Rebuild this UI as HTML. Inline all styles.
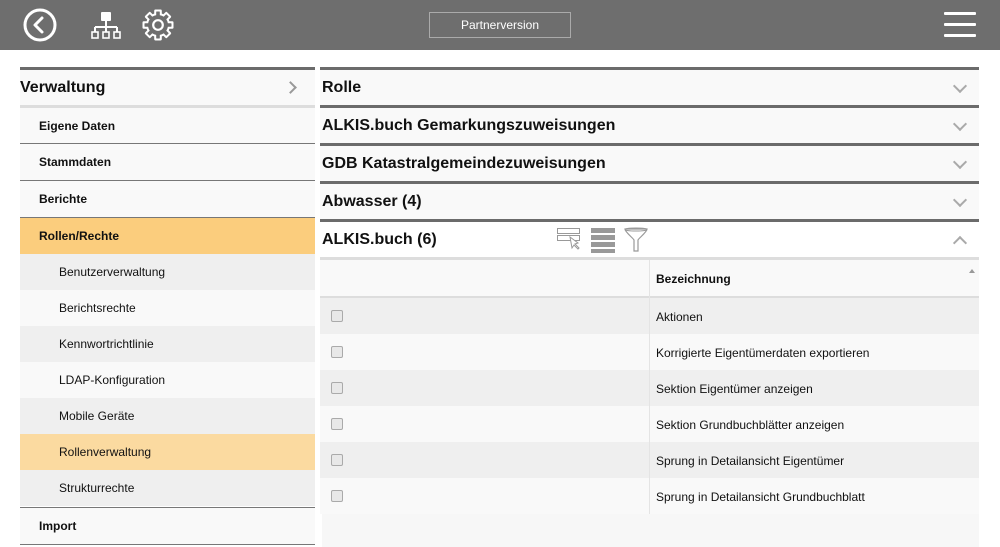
<!DOCTYPE html>
<html><head><meta charset="utf-8"><style>
*{box-sizing:border-box;margin:0;padding:0}
body{width:1000px;height:547px;background:#fff;font-family:"Liberation Sans",Arial,sans-serif;position:relative;overflow:hidden;color:#111}
.top{position:absolute;left:0;top:0;width:1000px;height:50px;background:#6e6e6e}
.pv{position:absolute;left:429px;top:12px;width:142px;height:26px;border:1px solid #aaa;color:#fff;font-size:12px;text-align:center;line-height:24px}
.hb{position:absolute;left:944px;width:32px;height:3px;background:#fff;border-radius:1px}
.r{position:absolute;left:0;width:295px;font-size:12px;padding-left:19px;border-top:1px solid #777;background:#f9f9f9;font-weight:bold}
.s{position:absolute;left:0;width:295px;font-size:12px;padding-left:39px;height:36px;line-height:36px}
.h{position:absolute;left:320px;width:659px;height:38px;border-top:3px solid #6b6b6b;background:#f9f9f9;font-size:16px;font-weight:bold;padding-left:2px;line-height:35px}
.chev{position:absolute;right:14px;top:11px;width:10px;height:10px;border-right:2px solid #aaa;border-bottom:2px solid #aaa;transform:rotate(45deg)}
.row{position:absolute;left:320px;width:659px;height:36px;font-size:12px}
.cb{position:absolute;left:11px;top:12px;width:12px;height:12px;border:1px solid #aaa;border-radius:2px;background:#e8e8e8}
.tx{position:absolute;left:336px;top:1px;line-height:36px}
</style></head><body>
<div class="top">
<svg style="position:absolute;left:22px;top:7px" width="36" height="36" viewBox="0 0 36 36"><circle cx="18" cy="18" r="15" fill="none" stroke="#fff" stroke-width="3"/><path d="M20 11 L13 18 L20 25" fill="none" stroke="#fff" stroke-width="3" stroke-linecap="round" stroke-linejoin="round"/></svg>
<svg style="position:absolute;left:90px;top:11px" width="32" height="30" viewBox="0 0 32 30"><rect x="11" y="1" width="10" height="9" rx="1" fill="#fff"/><path d="M16 10v6M5 16h22M5 16v5M16 16v5M27 16v5" stroke="#fff" stroke-width="2" fill="none"/><rect x="2" y="21" width="6" height="6" fill="none" stroke="#fff" stroke-width="1.6"/><rect x="13" y="21" width="6" height="6" fill="none" stroke="#fff" stroke-width="1.6"/><rect x="24" y="21" width="6" height="6" fill="none" stroke="#fff" stroke-width="1.6"/></svg>
<svg style="position:absolute;left:141px;top:8px" width="34" height="34" viewBox="-17 -17 34 34">
<g fill="#fff"><circle r="12"/>
<rect x="-3.8" y="-15.5" width="7.6" height="7" rx="1.2"/><rect x="-3.8" y="-15.5" width="7.6" height="7" rx="1.2" transform="rotate(45)"/><rect x="-3.8" y="-15.5" width="7.6" height="7" rx="1.2" transform="rotate(90)"/><rect x="-3.8" y="-15.5" width="7.6" height="7" rx="1.2" transform="rotate(135)"/><rect x="-3.8" y="-15.5" width="7.6" height="7" rx="1.2" transform="rotate(180)"/><rect x="-3.8" y="-15.5" width="7.6" height="7" rx="1.2" transform="rotate(225)"/><rect x="-3.8" y="-15.5" width="7.6" height="7" rx="1.2" transform="rotate(270)"/><rect x="-3.8" y="-15.5" width="7.6" height="7" rx="1.2" transform="rotate(315)"/></g>
<g fill="#6e6e6e"><circle r="10"/>
<rect x="-1.8" y="-13.5" width="3.6" height="5" rx=".5"/><rect x="-1.8" y="-13.5" width="3.6" height="5" rx=".5" transform="rotate(45)"/><rect x="-1.8" y="-13.5" width="3.6" height="5" rx=".5" transform="rotate(90)"/><rect x="-1.8" y="-13.5" width="3.6" height="5" rx=".5" transform="rotate(135)"/><rect x="-1.8" y="-13.5" width="3.6" height="5" rx=".5" transform="rotate(180)"/><rect x="-1.8" y="-13.5" width="3.6" height="5" rx=".5" transform="rotate(225)"/><rect x="-1.8" y="-13.5" width="3.6" height="5" rx=".5" transform="rotate(270)"/><rect x="-1.8" y="-13.5" width="3.6" height="5" rx=".5" transform="rotate(315)"/></g>
<circle r="4.8" fill="none" stroke="#fff" stroke-width="2.2"/></svg>
<div class="pv">Partnerversion</div>
<div class="hb" style="top:12px"></div><div class="hb" style="top:23px"></div><div class="hb" style="top:34px"></div>
</div>

<div class="r" style="top:67px;left:20px;height:38px;border-top:3px solid #6b6b6b;padding-left:0;font-size:16px;line-height:35px">Verwaltung<div style="position:absolute;right:20px;top:13px;width:9px;height:9px;border-right:2px solid #999;border-top:2px solid #999;transform:rotate(45deg)"></div></div>
<div class="r" style="top:105px;left:20px;height:38px;border-top:3px solid #ddd;line-height:36px">Eigene Daten</div>
<div class="r" style="top:143px;left:20px;height:38px;line-height:36px">Stammdaten</div>
<div class="r" style="top:180px;left:20px;height:37px;line-height:36px">Berichte</div>
<div class="r" style="top:217px;left:20px;height:37px;line-height:36px;background:#fbcd7d">Rollen/Rechte</div>
<div class="s" style="top:254px;left:20px;background:#efefef">Benutzerverwaltung</div>
<div class="s" style="top:290px;left:20px;background:#f9f9f9">Berichtsrechte</div>
<div class="s" style="top:326px;left:20px;background:#efefef">Kennwortrichtlinie</div>
<div class="s" style="top:362px;left:20px;background:#f9f9f9">LDAP-Konfiguration</div>
<div class="s" style="top:398px;left:20px;background:#efefef">Mobile Geräte</div>
<div class="s" style="top:434px;left:20px;background:#fbdaa0">Rollenverwaltung</div>
<div class="s" style="top:470px;left:20px;background:#efefef">Strukturrechte</div>
<div class="r" style="top:507px;left:20px;height:38px;line-height:36px">Import</div>
<div style="position:absolute;left:20px;top:544px;width:295px;height:1px;background:#777"></div>

<div class="h" style="top:67px">Rolle<div class="chev"></div></div>
<div class="h" style="top:105px">ALKIS.buch Gemarkungszuweisungen<div class="chev"></div></div>
<div class="h" style="top:143px">GDB Katastralgemeindezuweisungen<div class="chev"></div></div>
<div class="h" style="top:181px">Abwasser (4)<div class="chev"></div></div>
<div class="h" style="top:219px;background:#fff">ALKIS.buch (6)<div class="chev" style="transform:rotate(225deg);top:16px"></div>
<svg style="position:absolute;left:236px;top:4px" width="100" height="28" viewBox="0 0 100 28">
<rect x="1.5" y="2.5" width="22" height="5" fill="none" stroke="#999"/><rect x="1.5" y="9.5" width="22" height="5" fill="none" stroke="#999"/><path d="M14 11l2 11 2-3 4 4 1-1-4-4 3-1z" fill="#fff" stroke="#999"/>
<rect x="35" y="2" width="24" height="5" fill="#999"/><rect x="35" y="9" width="24" height="5" fill="#999"/><rect x="35" y="16" width="24" height="5" fill="#999"/><rect x="35" y="23" width="24" height="4" fill="#999"/>
<path d="M69 3h22c0 3-8 9-9 11v11h-4V14c-1-2-9-8-9-11z" fill="none" stroke="#999" stroke-width="1.2"/><ellipse cx="80" cy="3.5" rx="11" ry="1.5" fill="none" stroke="#999"/>
</svg></div>
<div style="position:absolute;left:320px;top:257px;width:659px;height:3px;background:#ddd"></div>
<div class="row" style="top:260px;height:37px;background:#f9f9f9;font-weight:bold"><div class="tx" style="line-height:36px">Bezeichnung</div><div style="position:absolute;right:4px;top:6px;border:3px solid transparent;border-bottom:4px solid #999"></div></div>
<div style="position:absolute;left:320px;top:296px;width:659px;height:2px;background:#ddd"></div>
<div class="row" style="top:298px;background:#efefef"><div class="cb"></div><div class="tx">Aktionen</div></div>
<div class="row" style="top:334px;background:#f9f9f9"><div class="cb"></div><div class="tx">Korrigierte Eigentümerdaten exportieren</div></div>
<div class="row" style="top:370px;background:#efefef"><div class="cb"></div><div class="tx">Sektion Eigentümer anzeigen</div></div>
<div class="row" style="top:406px;background:#f9f9f9"><div class="cb"></div><div class="tx">Sektion Grundbuchblätter anzeigen</div></div>
<div class="row" style="top:442px;background:#efefef"><div class="cb"></div><div class="tx">Sprung in Detailansicht Eigentümer</div></div>
<div class="row" style="top:478px;background:#f9f9f9"><div class="cb"></div><div class="tx">Sprung in Detailansicht Grundbuchblatt</div></div>
<div style="position:absolute;left:322px;top:514px;width:657px;height:33px;background:#f7f7f7"></div>
<div style="position:absolute;left:649px;top:260px;width:1px;height:254px;background:#e4e4e4"></div>
</body></html>
